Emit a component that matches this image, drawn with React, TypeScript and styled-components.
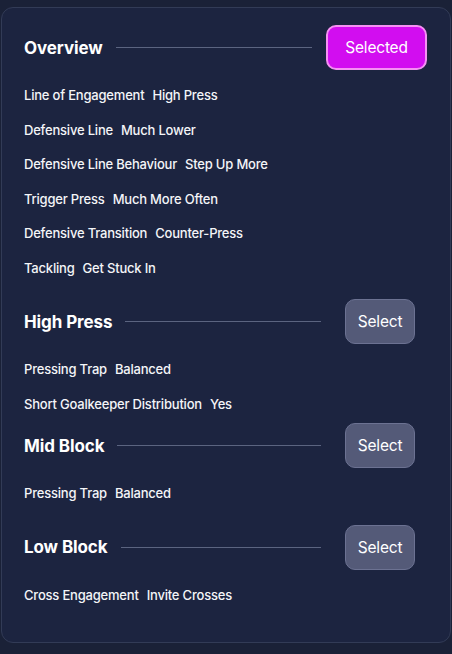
import styled, { createGlobalStyle, css } from "styled-components";

const sections = [
  {
    title: "Overview",
    selected: true,
    space: 14,
    rows: [
      ["Line of Engagement", "High Press"],
      ["Defensive Line", "Much Lower"],
      ["Defensive Line Behaviour", "Step Up More"],
      ["Trigger Press", "Much More Often"],
      ["Defensive Transition", "Counter-Press"],
      ["Tackling", "Get Stuck In"],
    ],
  },
  {
    title: "High Press",
    selected: false,
    space: 2,
    rows: [
      ["Pressing Trap", "Balanced"],
      ["Short Goalkeeper Distribution", "Yes"],
    ],
  },
  {
    title: "Mid Block",
    selected: false,
    space: 14,
    rows: [["Pressing Trap", "Balanced"]],
  },
  {
    title: "Low Block",
    selected: false,
    space: 14,
    rows: [["Cross Engagement", "Invite Crosses"]],
  },
];

const App = () => {
  return (
    <Page>
      <GlobalStyle />
      <Card>
        {sections.map(({ title, selected, space, rows }) => (
          <Section key={title}>
            <Header>
              <Title>{title}</Title>
              <Rule $selected={selected} />
              <Button $selected={selected}>{selected ? "Selected" : "Select"}</Button>
            </Header>
            <Rows $space={space}>
              {rows.map(([label, value]) => (
                <Row key={label}>
                  <span>{label}</span>
                  <span>{value}</span>
                </Row>
              ))}
            </Rows>
          </Section>
        ))}
      </Card>
    </Page>
  );
};

const GlobalStyle = createGlobalStyle`
  html, body {
    margin: 0;
    background: #1a2137;
  }
  body {
    font-family: Inter, "Noto Sans", sans-serif;
    -webkit-font-smoothing: antialiased;
  }
`;

const Page = styled.div`
  padding: 7px 1px 0 1px;
  min-height: 654px;
  box-sizing: border-box;
`;

const Card = styled.div`
  background: #1c2440;
  border: 1px solid #323b56;
  border-radius: 12px;
  height: 636px;
  box-sizing: border-box;
  padding: 17px 23px 0 22px;
  display: flex;
  flex-direction: column;
`;

const Section = styled.div`
  display: flex;
  flex-direction: column;
`;

const Header = styled.div`
  display: flex;
  align-items: center;
  height: 45px;
  margin-bottom: 8px;
`;

const Title = styled.div`
  color: #ffffff;
  font-size: 17px;
  font-weight: 700;
  letter-spacing: -0.1px;
  white-space: nowrap;
`;

const Rule = styled.div<{ $selected: boolean }>`
  flex: 1;
  height: 1px;
  background: #5b6480;
  margin-left: 13px;
  margin-right: ${({ $selected }) => ($selected ? "14px" : "24px")};
`;

const Button = styled.div<{ $selected: boolean }>`
  display: flex;
  align-items: center;
  justify-content: center;
  height: 45px;
  box-sizing: border-box;
  border-radius: 10px;
  color: #ffffff;
  font-size: 15.5px;
  letter-spacing: -0.2px;
  ${({ $selected }) =>
    $selected
      ? css`
          width: 101px;
          background: #d20df0;
          border: 2px solid #f590f3;
        `
      : css`
          width: 70px;
          margin-right: 12px;
          background: #545a78;
          border: 1px solid #6c7292;
        `}
`;

const Rows = styled.div<{ $space: number }>`
  display: flex;
  flex-direction: column;
  padding-bottom: ${({ $space }) => $space}px;
`;

const Row = styled.div`
  display: flex;
  gap: 8px;
  height: 34.5px;
  align-items: center;
  color: #f4f5f8;
  font-size: 13px;
  font-weight: 500;
  letter-spacing: -0.2px;
  white-space: nowrap;
`;

export default App;
